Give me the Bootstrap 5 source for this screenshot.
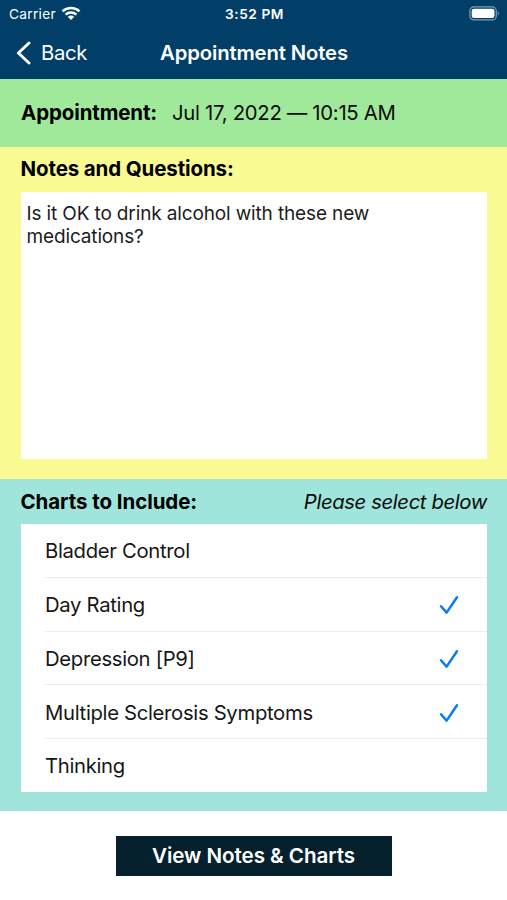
<!DOCTYPE html>
<html lang="en">
<head>
<meta charset="utf-8">
<meta name="viewport" content="width=device-width, initial-scale=1">
<title>Appointment Notes</title>
<link href="https://cdn.jsdelivr.net/npm/bootstrap@5.3.0/dist/css/bootstrap.min.css" rel="stylesheet">
<style>
  body { font-family: Inter, "Liberation Sans", sans-serif; font-size: 20.3px; line-height: 24px; letter-spacing: -.3px; color: #0b0b0b; background: #fff; }
  .app-head { background: #013f69; height: 79px; }
  .status { height: 28px; font-size: 13.7px; line-height: 28px; padding: 0 7px 0 9px; letter-spacing: .3px; }
  .status .wifi { margin-left: 5px; margin-top: -1px; }
  .status .battery { margin-top: -1px; }
  .clock { letter-spacing: .55px; }
  .side { flex: 1 1 0; }
  .title-row { height: 49px; padding: 0 15px; }
  .title-row h1 { font-size: 20.3px; line-height: 24px; letter-spacing: -.13px; padding-left: 1px; }
  .back-text { margin-left: 10px; }
  .when { background: #a0e99a; height: 67.5px; padding: 0 21px; gap: 15px; }
  .when-text { letter-spacing: -.28px; }
  .notes { background: #fafa93; height: 332px; padding: 10.5px 20px 19.5px 20.5px; }
  .notes h2, .charts h2, .when h2 { font-size: 20.5px; line-height: 24px; color: #000; letter-spacing: -.13px; }
  .notes h2 { letter-spacing: -.12px; }
  .note-box { margin-top: 11px; padding: 9.5px 6px; font-size: 19px; line-height: 23px; letter-spacing: -.14px; color: #1c1c1c; }
  .charts { background: #9fe5db; height: 332px; padding: 11px 20px 19px 20.5px; }
  .charts h2 { letter-spacing: -.07px; }
  .hint { letter-spacing: -.38px; }
  .chart-list { margin-top: 10.5px; padding-left: 24.5px; }
  .chart-row { height: 53.75px; padding: 2px 28.5px 0 0; border: 0; border-bottom: 1.4px solid #ececee; color: #161616; letter-spacing: -.32px; }
  .chart-row:last-child { border-bottom: 0; height: 52.5px; }
  .view-btn { width: 276px; height: 40px; margin-top: 25px; background: #05212d; color: #fff; font-size: 20.6px; line-height: 24px; letter-spacing: -.05px; }
  .view-btn:hover { background: #0b3344; color: #fff; }
</style>
<script src="https://cdn.jsdelivr.net/npm/bootstrap@5.3.0/dist/js/bootstrap.bundle.min.js" defer></script>
</head>
<body>
<svg class="d-none"><symbol id="tick" viewBox="0 0 20 20"><path d="M2 11.2 7.6 17.6 18 2.3" fill="none" stroke="#0b7af5" stroke-width="2.5" stroke-linecap="round" stroke-linejoin="round"/></symbol></svg>
<header class="app-head text-white">
  <div class="status d-flex align-items-center">
    <div class="side d-flex align-items-center">
      <span>Carrier</span>
      <svg class="wifi" width="20" height="15" viewBox="0 0 20 15" fill="none" stroke="#fff" stroke-width="2.5"><path d="M1.5 5.4a12.3 12.3 0 0 1 17 0M4.6 8.6a7.9 7.9 0 0 1 10.8 0"/><path d="M10 14 6.8 10.8a4.6 4.6 0 0 1 6.4 0Z" fill="#fff" stroke="none"/></svg>
    </div>
    <span class="clock fw-semibold">3:52 PM</span>
    <div class="side d-flex justify-content-end">
      <svg class="battery" width="31" height="15" viewBox="0 0 31 15"><rect x=".9" y=".9" width="26.4" height="13" rx="4" fill="none" stroke="#7f9fb4" stroke-width="1.2"/><rect x="2.7" y="2.7" width="22.8" height="9.4" rx="2.3" fill="#fff"/><path d="M28.7 5.2a3 3 0 0 1 0 4.4Z" fill="#7f9fb4"/></svg>
    </div>
  </div>
  <div class="title-row d-flex align-items-center">
    <a class="side d-flex align-items-center text-white text-decoration-none" href="#">
      <svg width="16" height="24" viewBox="0 0 16 24" fill="none" stroke="#fff" stroke-width="2.9" stroke-linecap="round" stroke-linejoin="round"><path d="M14 2 3.4 12 14 22"/></svg>
      <span class="back-text">Back</span>
    </a>
    <h1 class="fw-semibold m-0">Appointment Notes</h1>
    <div class="side"></div>
  </div>
</header>
<main>
  <section class="when d-flex align-items-center">
    <h2 class="fw-bold m-0">Appointment:</h2>
    <span class="when-text">Jul 17, 2022 — 10:15 AM</span>
  </section>
  <section class="notes d-flex flex-column">
    <h2 class="fw-bold mb-0">Notes and Questions:</h2>
    <div class="note-box bg-white flex-grow-1">Is it OK to drink alcohol with these new medications?</div>
  </section>
  <section class="charts">
    <div class="d-flex justify-content-between">
      <h2 class="fw-bold mb-0">Charts to Include:</h2>
      <em class="hint">Please select below</em>
    </div>
    <div class="chart-list list-group rounded-0 bg-white">
      <div class="chart-row list-group-item d-flex align-items-center justify-content-between"><span>Bladder Control</span></div>
      <div class="chart-row list-group-item d-flex align-items-center justify-content-between"><span>Day Rating</span><svg width="20" height="20"><use href="#tick"/></svg></div>
      <div class="chart-row list-group-item d-flex align-items-center justify-content-between"><span>Depression [P9]</span><svg width="20" height="20"><use href="#tick"/></svg></div>
      <div class="chart-row list-group-item d-flex align-items-center justify-content-between"><span>Multiple Sclerosis Symptoms</span><svg width="20" height="20"><use href="#tick"/></svg></div>
      <div class="chart-row list-group-item d-flex align-items-center justify-content-between"><span>Thinking</span></div>
    </div>
  </section>
</main>
<footer class="text-center">
  <button class="view-btn btn fw-semibold rounded-0 border-0 p-0" type="button">View Notes &amp; Charts</button>
</footer>
</body>
</html>
